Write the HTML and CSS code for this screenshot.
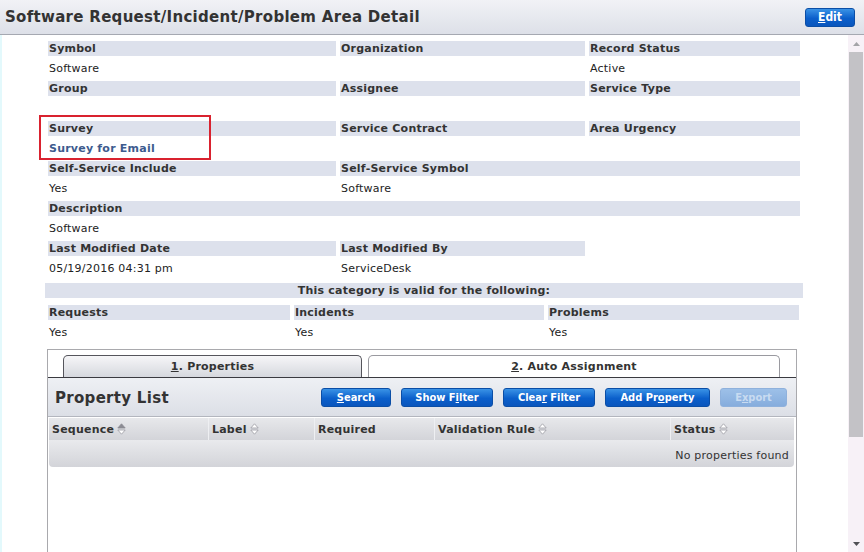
FILE: index.html
```html
<!DOCTYPE html>
<html lang="en">
<head>
  <meta charset="UTF-8">
  <title>Software Request/Incident/Problem Area Detail</title>
  <link rel="stylesheet" href="styles.css">
</head>
<body>
  <div class="header">
    <h1 class="title">Software Request/Incident/Problem Area Detail</h1>
    <button class="btn btn-edit"><u>E</u>dit</button>
  </div>

  <div class="page">
    <div class="content">
      <div class="fields">
        <div class="lbl">Symbol</div>
        <div class="lbl">Organization</div>
        <div class="lbl">Record Status</div>
        <div class="val">Software</div>
        <div class="val"></div>
        <div class="val">Active</div>

        <div class="lbl">Group</div>
        <div class="lbl">Assignee</div>
        <div class="lbl">Service Type</div>
        <div class="val"></div>
        <div class="val"></div>
        <div class="val"></div>

        <div class="lbl">Survey</div>
        <div class="lbl">Service Contract</div>
        <div class="lbl">Area Urgency</div>
        <div class="val"><a class="link" href="#">Survey for Email</a></div>
        <div class="val"></div>
        <div class="val"></div>

        <div class="lbl">Self-Service Include</div>
        <div class="lbl span2">Self-Service Symbol</div>
        <div class="val">Yes</div>
        <div class="val span2">Software</div>

        <div class="lbl span3">Description</div>
        <div class="val span3">Software</div>

        <div class="lbl">Last Modified Date</div>
        <div class="lbl">Last Modified By</div>
        <div class="blank"></div>
        <div class="val">05/19/2016 04:31 pm</div>
        <div class="val">ServiceDesk</div>
        <div class="val"></div>

        <div class="highlight"></div>
      </div>

      <div class="category">This category is valid for the following:</div>
      <div class="valid">
        <div class="lbl">Requests</div>
        <div class="lbl">Incidents</div>
        <div class="lbl">Problems</div>
        <div class="val">Yes</div>
        <div class="val">Yes</div>
        <div class="val">Yes</div>
      </div>

      <div class="panel">
        <div class="tabs">
          <div class="tab active"><u>1</u>. Properties</div>
          <div class="tab"><u>2</u>. Auto Assignment</div>
        </div>
        <div class="list-head">
          <h2 class="list-title">Property List</h2>
          <div class="actions">
            <button class="btn w-search"><u>S</u>earch</button>
            <button class="btn w-show">Show F<u>i</u>lter</button>
            <button class="btn w-clear">Clea<u>r</u> Filter</button>
            <button class="btn w-add">Add Pr<u>o</u>perty</button>
            <button class="btn w-export" disabled>E<u>x</u>port</button>
          </div>
        </div>
        <div class="grid">
          <div class="grid-head">
            <div class="col">Sequence
              <svg class="sort" width="9" height="12" viewBox="0 0 9 12"><path d="M4.5 0.8 L8.2 5 L0.8 5 Z" fill="#8b8b93" stroke="#8b8b93" stroke-width="0.8"/><path d="M4.5 11.2 L8.2 7 L0.8 7 Z" fill="#fff" stroke="#9a9aa2" stroke-width="0.8"/></svg>
            </div>
            <div class="col">Label
              <svg class="sort" width="9" height="12" viewBox="0 0 9 12"><path d="M4.5 0.8 L8.2 5 L0.8 5 Z" fill="#fff" stroke="#9a9aa2" stroke-width="0.8"/><path d="M4.5 11.2 L8.2 7 L0.8 7 Z" fill="#fff" stroke="#9a9aa2" stroke-width="0.8"/></svg>
            </div>
            <div class="col">Required</div>
            <div class="col">Validation Rule
              <svg class="sort" width="9" height="12" viewBox="0 0 9 12"><path d="M4.5 0.8 L8.2 5 L0.8 5 Z" fill="#fff" stroke="#9a9aa2" stroke-width="0.8"/><path d="M4.5 11.2 L8.2 7 L0.8 7 Z" fill="#fff" stroke="#9a9aa2" stroke-width="0.8"/></svg>
            </div>
            <div class="col last">Status
              <svg class="sort" width="9" height="12" viewBox="0 0 9 12"><path d="M4.5 0.8 L8.2 5 L0.8 5 Z" fill="#fff" stroke="#9a9aa2" stroke-width="0.8"/><path d="M4.5 11.2 L8.2 7 L0.8 7 Z" fill="#fff" stroke="#9a9aa2" stroke-width="0.8"/></svg>
            </div>
          </div>
          <div class="grid-empty">No properties found</div>
        </div>
      </div>
    </div>

    <div class="scrollbar">
      <div class="sb-arrow"><svg width="7" height="4" viewBox="0 0 7 4"><path d="M3.5 0 L7 4 L0 4 Z" fill="#a4a4a8"/></svg></div>
      <div class="sb-thumb"></div>
      <div class="sb-space"></div>
      <div class="sb-arrow"><svg width="7" height="4" viewBox="0 0 7 4"><path d="M0 0 L7 0 L3.5 4 Z" fill="#505055"/></svg></div>
    </div>
  </div>
</body>
</html>
```

FILE: styles.css
```css
body {
  margin: 0;
  font-family: "DejaVu Sans", Verdana, sans-serif;
  font-size: 11px;
  letter-spacing: 0.22px;
  color: #222;
  background: #fff;
  height: 552px;
  overflow: hidden;
}
.header {
  height: 34px;
  border-bottom: 1px solid #a5a8b1;
  background: linear-gradient(to bottom, #f1f2f6, #dde0e8);
  display: flex;
  align-items: center;
  justify-content: space-between;
  padding: 0 9px 0 5px;
}
.title {
  margin: 0;
  font-size: 15px;
  font-weight: bold;
  letter-spacing: 0.3px;
  color: #333;
}
.btn {
  font-family: "DejaVu Sans Condensed", "DejaVu Sans", sans-serif;
  font-size: 11px;
  font-weight: bold;
  letter-spacing: 0;
  color: #fff;
  height: 19px;
  padding: 0;
  border: 1px solid #0b4ea6;
  border-radius: 3px;
  background: linear-gradient(to bottom, #3a93e6, #0b5fcb 55%, #0a56bd);
  cursor: pointer;
}
.btn-edit {
  width: 50px;
  font-size: 12px;
}
.btn:disabled {
  background: linear-gradient(to bottom, #9dc0e8, #86addd);
  border-color: #8fb1dc;
  color: #c8dbf1;
}
.page {
  display: flex;
  height: 517px;
}
.content {
  flex-grow: 1;
  border-left: 2px solid #e3f9fc;
  padding: 6px 0 0 43px;
  overflow: hidden;
}
.fields {
  position: relative;
  margin-left: 3px;
  display: grid;
  grid-template-columns: 288px 245px 211px;
  column-gap: 4px;
}
.lbl {
  height: 15px;
  line-height: 15px;
  padding-left: 1px;
  background: #dde1ec;
  font-weight: bold;
  color: #333;
  white-space: nowrap;
}
.blank {
  height: 15px;
}
.val {
  height: 20px;
  padding: 5px 0 0 1px;
  line-height: 15px;
  white-space: nowrap;
}
.span2 {
  grid-column: span 2;
}
.span3 {
  grid-column: span 3;
}
.link {
  color: #3d5b8e;
  font-weight: bold;
  text-decoration: none;
}
.highlight {
  position: absolute;
  left: -9px;
  top: 74px;
  width: 168px;
  height: 41px;
  border: 2px solid #d9222f;
}
.category {
  width: 758px;
  margin-top: 2px;
  height: 15px;
  line-height: 15px;
  background: #dde1ec;
  font-weight: bold;
  color: #333;
  text-align: center;
}
.valid {
  margin: 7px 0 0 3px;
  display: grid;
  grid-template-columns: 242px 250px 251px;
  column-gap: 4px;
}
.panel {
  margin: 4px 0 0 2px;
  width: 748px;
  height: 300px;
  border: 1px solid #a9a9ad;
  border-bottom: none;
}
.tabs {
  display: flex;
  gap: 6px;
  padding: 5px 0 0 15px;
  border-bottom: 1px solid #3a3a40;
}
.tab {
  height: 21px;
  line-height: 21px;
  text-align: center;
  font-weight: bold;
  color: #333;
  border: 1px solid #9a9aa0;
  border-bottom: none;
  border-radius: 5px 5px 0 0;
  background: #fff;
}
.tab:first-child {
  width: 297px;
}
.tab:last-child {
  width: 410px;
}
.tab.active {
  border-color: #55555c;
  background: linear-gradient(to bottom, #f6f6f8, #d6d8de);
}
.list-head {
  height: 38px;
  border-bottom: 1px solid #b3b6be;
  background: linear-gradient(to bottom, #eef0f4, #dcdfe6);
  display: flex;
  align-items: center;
  justify-content: space-between;
  padding: 0 9px 0 7px;
}
.list-title {
  margin: 2px 0 0;
  font-size: 15px;
  font-weight: bold;
  letter-spacing: 0.3px;
  color: #333;
}
.actions {
  display: flex;
  gap: 10px;
  margin-top: 1px;
}
.w-search { width: 70px; }
.w-show { width: 92px; }
.w-clear { width: 92px; }
.w-add { width: 105px; }
.w-export { width: 67px; }
.grid {
  margin: 1px 2px 0 1px;
}
.grid-head {
  display: grid;
  grid-template-columns: 160px 106px 120px 236px 1fr;
  height: 22px;
  background: linear-gradient(to bottom, #e7e8eb, #d3d4d9);
}
.col {
  display: flex;
  align-items: center;
  gap: 3px;
  padding: 0 3px;
  font-weight: bold;
  color: #333;
  border-right: 1px solid #eeeff2;
  white-space: nowrap;
}
.col.last {
  border-right: none;
}
.sort {
  flex: none;
}
.grid-empty {
  height: 23px;
  padding: 4px 5px 0 0;
  line-height: 23px;
  text-align: right;
  color: #333;
  background: linear-gradient(to bottom, #e9eaed, #d3d4d9);
  border-radius: 0 0 4px 4px;
}
.scrollbar {
  width: 16px;
  flex: none;
  background: #f7f1f7;
  display: flex;
  flex-direction: column;
  align-items: center;
}
.sb-arrow {
  height: 17px;
  display: flex;
  align-items: center;
  justify-content: center;
}
.sb-thumb {
  width: 14px;
  height: 385px;
  background: #c3c2c6;
}
.sb-space {
  flex-grow: 1;
}
```
